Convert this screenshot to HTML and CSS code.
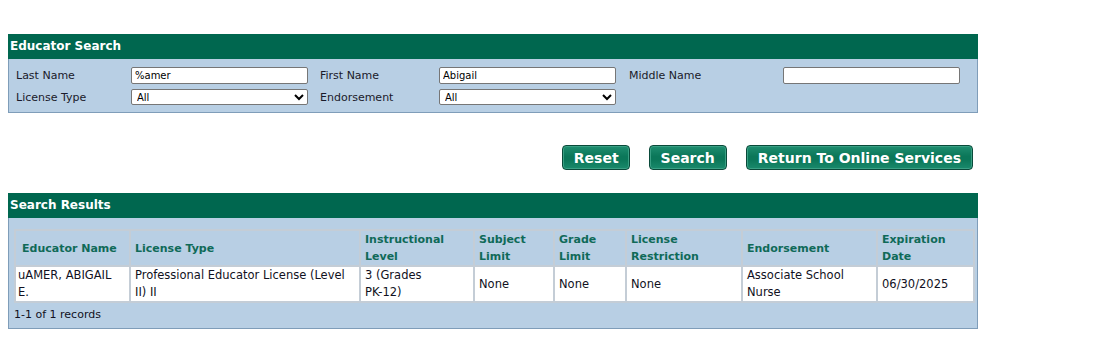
FILE: index.html
```html
<!DOCTYPE html>
<html>
<head>
<meta charset="utf-8">
<link rel="stylesheet" href="styles.css">
</head>
<body>
<div class="page">
  <section class="panel search-panel">
    <div class="panel-head">Educator Search</div>
    <div class="panel-body form-grid">
      <label class="lbl">Last Name</label>
      <input class="field" type="text" value="%amer">
      <label class="lbl">First Name</label>
      <input class="field" type="text" value="Abigail">
      <label class="lbl">Middle Name</label>
      <input class="field" type="text" value="">
      <label class="lbl">License Type</label>
      <select class="field sel"><option>All</option></select>
      <label class="lbl">Endorsement</label>
      <select class="field sel"><option>All</option></select>
    </div>
  </section>

  <div class="actions">
    <button class="btn">Reset</button>
    <button class="btn">Search</button>
    <button class="btn">Return To Online Services</button>
  </div>

  <section class="panel results-panel">
    <div class="panel-head">Search Results</div>
    <div class="panel-body results-body">
      <table class="results">
        <colgroup>
          <col class="c1"><col class="c2"><col class="c3"><col class="c4"><col class="c5"><col class="c6"><col class="c7"><col class="c8">
        </colgroup>
        <thead>
          <tr>
            <th>Educator Name</th>
            <th>License Type</th>
            <th>Instructional Level</th>
            <th>Subject Limit</th>
            <th>Grade Limit</th>
            <th>License Restriction</th>
            <th>Endorsement</th>
            <th>Expiration Date</th>
          </tr>
        </thead>
        <tbody>
          <tr>
            <td>uAMER, ABIGAIL E.</td>
            <td>Professional Educator License (Level II) II</td>
            <td class="narrow">3 (Grades <span class="nowrap">PK-12)</span></td>
            <td>None</td>
            <td>None</td>
            <td>None</td>
            <td>Associate School Nurse</td>
            <td>06/30/2025</td>
          </tr>
        </tbody>
      </table>
      <div class="records">1-1 of 1 records</div>
    </div>
  </section>
</div>
</body>
</html>
```

FILE: styles.css
```css
html, body {
  margin: 0;
  padding: 0;
  background: #ffffff;
}
body {
  font-family: "DejaVu Sans", Verdana, sans-serif;
  font-size: 11px;
  color: #111122;
}
.page {
  padding: 34px 0 0 8px;
  width: 970px;
}
.panel {
  background: #b8cfe4;
  border: 1px solid #7f9db9;
  border-top: none;
}
.panel-head {
  background: #00674f;
  color: #ffffff;
  font-weight: bold;
  font-size: 12px;
  height: 25px;
  line-height: 24px;
  padding-left: 2px;
  margin: 0 -1px;
}
.form-grid {
  display: grid;
  grid-template-columns: 115px 189px 119px 190px 154px 178px;
  grid-auto-rows: 22px;
  align-items: center;
  padding: 5px 0 4px 7px;
}
.lbl {
  font-size: 11px;
  color: #1a1a2a;
}
.field {
  box-sizing: border-box;
  width: 177px;
  height: 17px;
  border: 1px solid #767676;
  border-radius: 2px;
  background: #ffffff;
  font-family: "DejaVu Sans", Verdana, sans-serif;
  font-size: 10px;
  padding: 0 3px;
  margin: 0;
  color: #000000;
}
.sel {
  height: 16px;
  padding: 0 0 0 1px;
}
.actions {
  display: flex;
  justify-content: flex-end;
  gap: 19px;
  padding: 32px 5px 0 0;
  height: 25px;
  margin-bottom: 23px;
}
.btn {
  height: 25px;
  padding: 0 11px;
  border: 1px solid #0a4a3a;
  border-radius: 4px;
  background: linear-gradient(to bottom, #1f8e70 0%, #0b7759 45%, #0b7759 60%, #1a8a6c 100%);
  box-shadow: inset 0 0 0 1px #3aa084;
  color: #ffffff;
  font-family: "DejaVu Sans", Verdana, sans-serif;
  font-weight: bold;
  font-size: 14px;
  cursor: pointer;
}
.btn:first-child { padding: 0 10px 0 11px; }
.results-body {
  padding: 11px 4px 0 5px;
  height: 99px;
}
.results {
  border-collapse: collapse;
  table-layout: fixed;
  width: 959px;
  border: 2px solid #c4cdd6;
}
.c1 { width: 115px; }
.c2 { width: 230px; }
.c3 { width: 114px; }
.c4 { width: 80px; }
.c5 { width: 72px; }
.c6 { width: 116px; }
.c7 { width: 135px; }
.c8 { width: 97px; }
.results th, .results td {
  border: 2px solid #c4cdd6;
  text-align: left;
  vertical-align: middle;
  padding: 0 10px 0 4px;
  line-height: 17px;
  height: 35px;
  box-sizing: border-box;
}
.results th {
  background: #b8cfe4;
  color: #0f6a58;
  font-weight: bold;
  font-size: 11px;
}
.results td {
  background: #ffffff;
  color: #111122;
  font-size: 11.5px;
}
.results td.narrow { padding-right: 18px; }
.nowrap { white-space: nowrap; }
.results th:first-child { padding-left: 6px; }
.results td:first-child { padding-left: 2px; }
.records {
  padding: 5px 0 0 0;
  font-size: 11px;
}
```
